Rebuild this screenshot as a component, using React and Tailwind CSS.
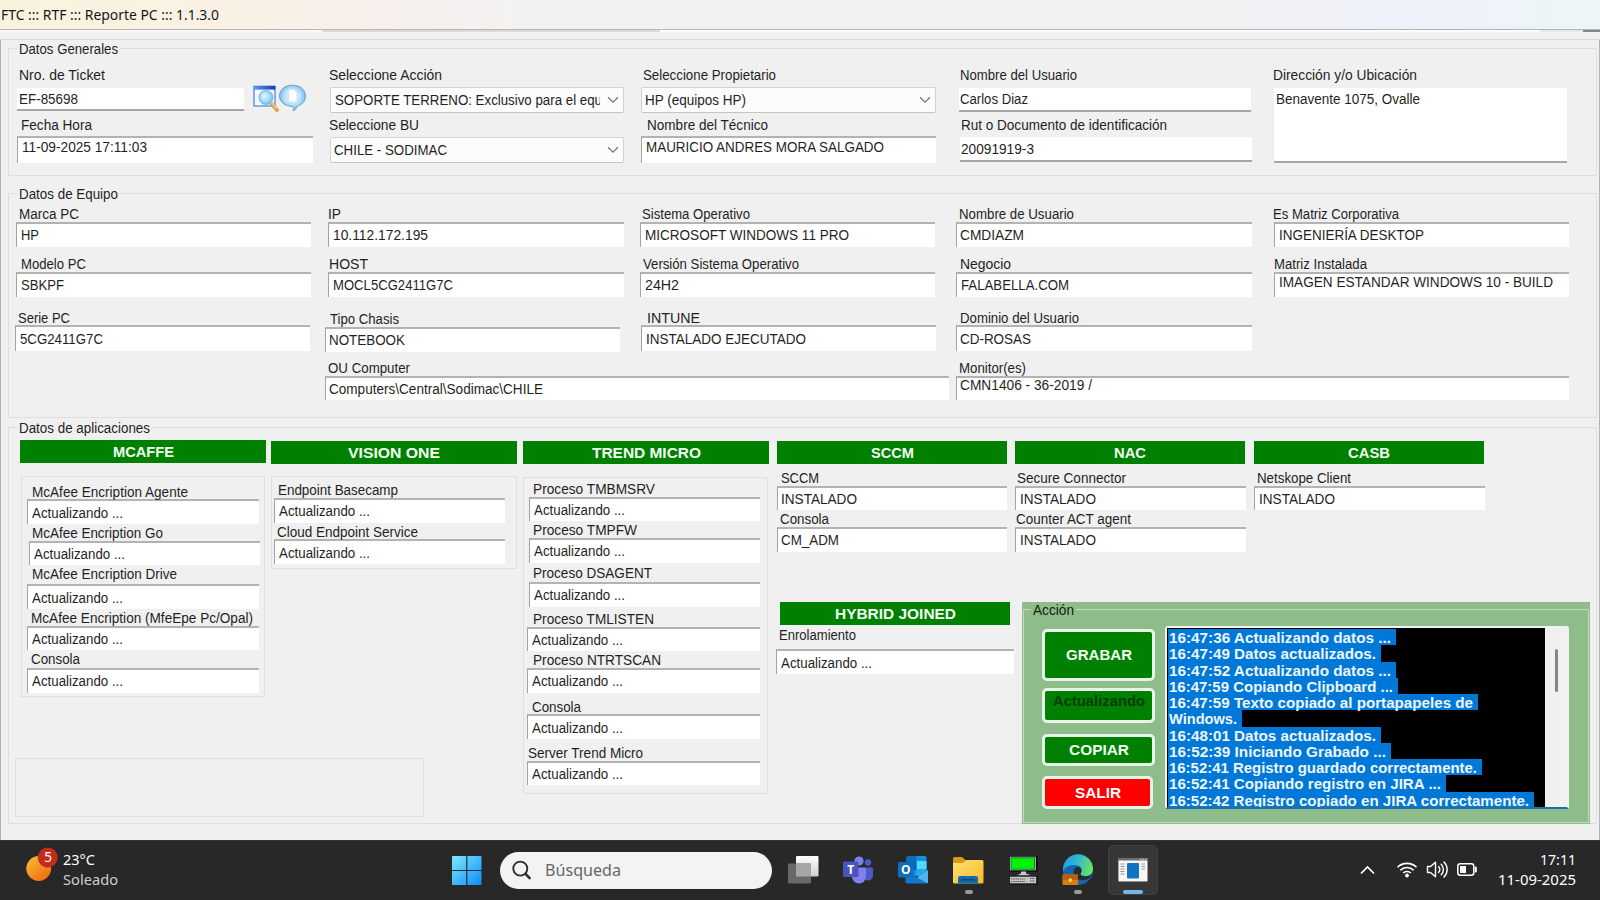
import { useLayoutEffect, useRef } from "react";

/* Text condensed or widened horizontally so that it takes exactly `w` pixels. */
function Fit({ w, children, className = "" }) {
  const ref = useRef(null);
  useLayoutEffect(() => {
    const el = ref.current;
    el.style.transform = "none";
    const natural = el.getBoundingClientRect().width;
    if (natural) el.style.transform = `scaleX(${w / natural})`;
  }, [w, children]);
  return (
    <span className={`block shrink-0 text-left ${className}`} style={{ width: w }}>
      <span ref={ref} className="inline-block origin-left whitespace-pre align-top">
        {children}
      </span>
    </span>
  );
}

const KINDS = {
  sunken: "border-t-2 border-l border-t-[#b3b3b3] border-l-[#a3a3a3] bg-white pb-[1px]",
  flat: "border-b-2 border-b-[#a6a6a6] bg-white",
  select: "border border-[#d2d2d2] border-b-[#c4c4c4] bg-[#fcfcfc] rounded-[2px]",
};

function Chevron() {
  return (
    <svg className="mr-[4px] ml-auto h-[8px] w-[12px] shrink-0" viewBox="0 0 12 8" fill="none">
      <path d="M1 1.2 6 6.2 11 1.2" stroke="#767676" strokeWidth="1.3" />
    </svg>
  );
}

function Field({ c = "", l, lw, lc = "", b, k = "sunken", v, vw, vc = "", clip }) {
  return (
    <div className={`flex flex-col items-start ${c}`}>
      <div className={`h-4 leading-4 ${lc}`}>
        <Fit w={lw + 2}>{l}</Fit>
      </div>
      <div className={`flex items-center ${KINDS[k]} ${b}`}>
        <div className={`leading-4 ${clip ? "w-[265px] shrink-0 overflow-hidden" : ""} ${vc}`}>
          <Fit w={vw + 1}>{v}</Fit>
        </div>
        {k === "select" && <Chevron />}
      </div>
    </div>
  );
}

function Group({ title, tw, className, children }) {
  return (
    <section className={`relative ml-[7px] w-[1589px] shrink-0 border border-[#dedede] ${className}`}>
      <div className="absolute -top-[8px] left-[8px] bg-[#f0f0f0] px-[2px] leading-4">
        <Fit w={tw + 1}>{title}</Fit>
      </div>
      {children}
    </section>
  );
}

function Header({ children, w, className = "" }) {
  return (
    <div
      className={`flex h-[23px] shrink-0 items-center justify-center bg-[#008000] font-bold leading-4 text-[#f2fff2] ${className}`}
    >
      <Fit w={w + 1}>{children}</Fit>
    </div>
  );
}

const A = "Actualizando ...";
const I = "INSTALADO";

function SearchIcons() {
  return (
    <svg className="mt-[17px] ml-[9px] h-[29px] w-[55px]" viewBox="0 0 55 29">
      <defs>
        <linearGradient id="bar" x1="0" x2="1">
          <stop offset="0" stopColor="#5b9bea" />
          <stop offset="1" stopColor="#1838b4" />
        </linearGradient>
        <radialGradient id="glass" cx=".4" cy=".4" r=".65">
          <stop offset="0" stopColor="#e0fbff" />
          <stop offset="1" stopColor="#6cc6f4" />
        </radialGradient>
        <radialGradient id="bubble" cx=".5" cy=".45" r=".6">
          <stop offset="0" stopColor="#f0fbff" />
          <stop offset=".55" stopColor="#b4e2fa" />
          <stop offset="1" stopColor="#4fa4de" />
        </radialGradient>
      </defs>
      <rect x="1" y="2.500" width="21" height="19.500" fill="#f3f8ff" stroke="#5a94e2" strokeWidth="1.4" />
      <rect x=".4" y="1.800" width="22" height="3.800" fill="url(#bar)" />
      <path d="m18 19 6 7" stroke="#dba44c" strokeWidth="4" strokeLinecap="round" />
      <path d="m18 18 5.6 6.4" stroke="#f3d08c" strokeWidth="1.3" strokeLinecap="round" />
      <circle cx="13" cy="13.500" r="6.800" fill="url(#glass)" stroke="#7fbbe8" strokeWidth="1.3" />
      <path
        d="M39.500 1.200c7.600 0 13 4.600 13 10.800 0 5.200-3.600 8.800-8.400 10-.4 2.300-1.700 4-4 4.800.6-1.500.5-3-.4-4.400C32.300 22.300 26.500 18.200 26.500 12 26.500 5.800 31.900 1.200 39.500 1.200Z"
        fill="url(#bubble)"
        stroke="#6f9dbd"
        strokeWidth="1"
      />
      <path d="M35.500 5.500h5.500l3 3V18H35.500Z" fill="#fdfdff" stroke="#c9d9ee" strokeWidth=".6" />
    </svg>
  );
}

function General() {
  return (
    <Group title="Datos Generales" tw={98} className="mt-[8px] flex h-[128px] pl-[6px] pt-[18px]">
      <div className="w-[310px] shrink-0">
        <div className="flex">
          <Field l="Nro. de Ticket" lw={84} lc="ml-[4px]" k="flat" b="ml-[2px] mt-[5px] h-[23px] w-[227px]" v="EF-85698" vw={58} vc="pl-[2px]" />
          <SearchIcons />
        </div>
        <Field c="mt-[4px]" l="Fecha Hora" lw={69} lc="ml-[6px]" b="ml-[2px] mt-[3px] h-[27px] w-[296px]" v="11-09-2025 17:11:03" vw={124} vc="pl-[4px] pb-[7px]" />
      </div>
      <div className="w-[315px] shrink-0">
        <Field l="Seleccione Acción" lw={111} lc="ml-[4px]" k="select" b="ml-[5px] mt-[4px] h-[26px] w-[294px]" v="SOPORTE TERRENO: Exclusivo para el equ" vw={266} vc="ml-[4px]" clip />
        <Field c="mt-[4px]" l="Seleccione BU" lw={88} lc="ml-[4px]" k="select" b="ml-[5px] mt-[4px] h-[26px] w-[294px]" v="CHILE - SODIMAC" vw={112} vc="ml-[3px]" />
      </div>
      <div className="w-[316px] shrink-0">
        <Field l="Seleccione Propietario" lw={131} lc="ml-[3px]" k="select" b="ml-[1px] mt-[4px] h-[26px] w-[295px]" v="HP (equipos HP)" vw={100} vc="ml-[3px]" />
        <Field c="mt-[4px]" l="Nombre del Técnico" lw={119} lc="ml-[7px]" b="ml-[1px] mt-[3px] h-[27px] w-[295px]" v="MAURICIO ANDRES MORA SALGADO" vw={237} vc="pl-[4px] pb-[7px]" />
      </div>
      <div className="w-[317px] shrink-0">
        <Field l="Nombre del Usuario" lw={115} lc="ml-[4px]" k="flat" b="ml-[3px] mt-[5px] h-[24px] w-[292px]" v="Carlos Diaz" vw={67} vc="pl-[1px]" />
        <Field c="mt-[5px]" l="Rut o Documento de identificación" lw={204} lc="ml-[5px]" k="flat" b="ml-[4px] mt-[4px] h-[25px] w-[292px]" v="20091919-3" vw={72} vc="pl-[1px]" />
      </div>
      <Field l="Dirección y/o Ubicación" lw={142} k="flat" b="ml-[1px] mt-[5px] h-[75px] w-[293px]" v="Benavente 1075, Ovalle" vw={143} vc="pl-[2px] pb-[51px]" />
    </Group>
  );
}

function Equipment() {
  return (
    <Group title="Datos de Equipo" tw={98} className="mt-[17px] flex h-[225px] pl-[6px] pt-[12px]">
      <div className="w-[310px] shrink-0">
        <Field l="Marca PC" lw={58} lc="ml-[4px]" b="ml-[1px] h-[25px] w-[295px]" v="HP" vw={17} vc="pl-[4px]" />
        <Field c="mt-[9px]" l="Modelo PC" lw={63} lc="ml-[6px]" b="ml-[1px] h-[25px] w-[295px]" v="SBKPF" vw={42} vc="pl-[4px]" />
        <Field c="mt-[13px]" l="Serie PC" lw={50} lc="ml-[3px]" b="-mt-[1px] h-[26px] w-[295px]" v="5CG2411G7C" vw={82} vc="pl-[4px]" />
      </div>
      <div className="w-[315px] shrink-0">
        <Field l="IP" lw={11} lc="ml-[3px]" b="ml-[3px] h-[25px] w-[296px]" v="10.112.172.195" vw={94} vc="pl-[4px]" />
        <Field c="mt-[9px]" l="HOST" lw={37} lc="ml-[4px]" b="ml-[3px] h-[25px] w-[296px]" v="MOCL5CG2411G7C" vw={119} vc="pl-[4px]" />
        <Field c="mt-[14px]" l="Tipo Chasis" lw={67} lc="ml-[5px]" b="h-[25px] w-[295px]" v="NOTEBOOK" vw={75} vc="pl-[3px]" />
        <Field c="mt-[8px]" l="OU Computer" lw={80} lc="ml-[3px]" b="relative h-[24px] w-[624px]" v={"Computers\\Central\\Sodimac\\CHILE"} vw={213} vc="pl-[3px]" />
      </div>
      <div className="w-[316px] shrink-0">
        <Field l="Sistema Operativo" lw={106} lc="ml-[2px]" b="h-[25px] w-[295px]" v="MICROSOFT WINDOWS 11 PRO" vw={203} vc="pl-[4px]" />
        <Field c="mt-[9px]" l="Versión Sistema Operativo" lw={154} lc="ml-[3px]" b="h-[25px] w-[295px]" v="24H2" vw={33} vc="pl-[4px]" />
        <Field c="mt-[13px]" l="INTUNE" lw={51} lc="ml-[7px]" b="ml-[1px] -mt-[1px] h-[26px] w-[295px]" v="INSTALADO EJECUTADO" vw={159} vc="pl-[4px]" />
      </div>
      <div className="w-[317px] shrink-0">
        <Field l="Nombre de Usuario" lw={113} lc="ml-[3px]" b="h-[25px] w-[296px]" v="CMDIAZM" vw={63} vc="pl-[3px]" />
        <Field c="mt-[9px]" l="Negocio" lw={49} lc="ml-[4px]" b="h-[25px] w-[296px]" v="FALABELLA.COM" vw={107} vc="pl-[4px]" />
        <Field c="mt-[13px]" l="Dominio del Usuario" lw={117} lc="ml-[4px]" b="-mt-[1px] h-[26px] w-[296px]" v="CD-ROSAS" vw={70} vc="pl-[3px]" />
        <Field c="mt-[9px]" l="Monitor(es)" lw={65} lc="ml-[3px]" b="h-[24px] w-[613px]" v="CMN1406 - 36-2019 /" vw={131} vc="pl-[3px] pb-[7px]" />
      </div>
      <div className="shrink-0">
        <Field l="Es Matriz Corporativa" lw={124} b="ml-[1px] h-[25px] w-[295px]" v="INGENIERÍA DESKTOP" vw={144} vc="pl-[4px]" />
        <Field c="mt-[9px]" l="Matriz Instalada" lw={91} lc="ml-[1px]" b="ml-[1px] h-[25px] w-[295px]" v="IMAGEN ESTANDAR WINDOWS 10 - BUILD" vw={273} vc="pl-[4px] pb-[7px]" />
      </div>
    </Group>
  );
}

function ActionButton({ children, w, className }) {
  return (
    <button
      className={`flex items-center justify-center rounded-[5px] border-[3px] border-[#e9f4e9] font-bold leading-4 ${className}`}
    >
      <Fit w={w + 1}>{children}</Fit>
    </button>
  );
}

const LOG = [
  ["16:47:36 Actualizando datos ...", 221],
  ["16:47:49 Datos actualizados.", 206],
  ["16:47:52 Actualizando datos ...", 221],
  ["16:47:59 Copiando Clipboard ...", 223],
  ["16:47:59 Texto copiado al portapapeles de", 303],
  ["Windows.", 67],
  ["16:48:01 Datos actualizados.", 206],
  ["16:52:39 Iniciando Grabado ...", 216],
  ["16:52:41 Registro guardado correctamente.", 307],
  ["16:52:41 Copiando registro en JIRA ...", 271],
  ["16:52:42 Registro copiado en JIRA correctamente.", 359],
];

function ActionPanel() {
  return (
    <div className="h-[222px] w-[568px] shrink-0 bg-[#8fbc8b] pt-[7px] pl-[1px]">
      <div className="relative flex h-[214px] w-[566px] border border-[#bfdabd] pl-[18px]">
        <div className="absolute -top-[8px] left-[7px] bg-[#8fbc8b] px-[2px] leading-4 text-[#10240f]">
          <Fit w={41}>Acción</Fit>
        </div>
        <div className="w-[123px] shrink-0 pt-[19px]">
          <ActionButton w={65} className="h-[52px] w-[113px] bg-[#008000] text-[#f2fff2]">GRABAR</ActionButton>
          <ActionButton w={91} className="mt-[7px] h-[35px] w-[113px] bg-[#008000] pb-[10px] text-[#053b05]">Actualizando</ActionButton>
          <ActionButton w={59} className="mt-[11px] h-[32px] w-[113px] bg-[#008000] text-[#f2fff2]">COPIAR</ActionButton>
          <ActionButton w={45} className="mt-[10px] h-[33px] w-[111px] bg-[#ff0000] text-white">SALIR</ActionButton>
        </div>
        <div className="mt-[16px] flex h-[183px] w-[404px] rounded-t-[3px] border-2 border-[#eef3ee] border-b-[#1d6fa5] bg-[#f0f0f0]">
          <div className="h-[179px] w-[378px] overflow-hidden bg-black pt-[1px] pl-[1px] font-bold text-[#eef7ff]">
            {LOG.map(([text, w], i) => (
              <div key={i} className="h-[16.25px] w-fit bg-[#0078d7] pr-[5px] pl-[1px] text-[14.500px] leading-[18px]">
                <Fit w={w + 1}>{text}</Fit>
              </div>
            ))}
          </div>
          <div className="mt-[21px] ml-[10px] h-[43px] w-[3px] rounded-full bg-[#868686]" />
        </div>
      </div>
    </div>
  );
}

function Applications() {
  return (
    <Group title="Datos de aplicaciones" tw={130} className="mt-[9px] flex h-[397px]">
      <div className="flex w-[514px] shrink-0 flex-col pl-[6px]">
        <div className="flex pl-[5px]">
          <div className="w-[251px] shrink-0 pt-[12px]">
            <Header w={60} className="w-[246px]">MCAFFE</Header>
            <div className="mt-[13px] ml-[1px] h-[221px] w-[244px] border border-[#dfdfdf] pt-[7px]">
              <Field l="McAfee Encription Agente" lw={154} lc="ml-[10px]" b="ml-[5px] -mt-[1px] h-[25px] w-[232px]" v={A} vw={90} vc="pl-[4px] pt-[1px]" />
              <Field c="mt-[1px]" l="McAfee Encription Go" lw={129} lc="ml-[10px]" b="ml-[7px] h-[24px] w-[231px]" v={A} vw={90} vc="pl-[4px]" />
              <Field c="mt-[1px]" l="McAfee Encription Drive" lw={143} lc="ml-[10px]" b="ml-[5px] mt-[2px] h-[25px] w-[232px]" v={A} vw={90} vc="pl-[4px] pt-[1px]" />
              <Field c="mt-[1px]" l="McAfee Encription (MfeEpe Pc/Opal)" lw={220} lc="ml-[9px]" b="ml-[5px] h-[24px] w-[232px]" v={A} vw={90} vc="pl-[4px]" />
              <Field c="mt-[1px]" l="Consola" lw={47} lc="ml-[9px]" b="ml-[5px] mt-[1px] h-[25px] w-[232px]" v={A} vw={90} vc="pl-[4px]" />
            </div>
          </div>
          <div className="w-[252px] shrink-0 pt-[13px]">
            <Header w={91} className="w-[246px]">VISION ONE</Header>
            <div className="mt-[12px] h-[93px] w-[246px] border border-[#dfdfdf] pt-[5px]">
              <Field l="Endpoint Basecamp" lw={118} lc="ml-[6px]" b="ml-[2px] h-[25px] w-[231px]" v={A} vw={90} vc="pl-[4px]" />
              <Field c="mt-[1px]" l="Cloud Endpoint Service" lw={139} lc="ml-[5px]" b="ml-[2px] -mt-[1px] h-[25px] w-[231px]" v={A} vw={90} vc="pl-[4px] pt-[1px]" />
            </div>
          </div>
        </div>
        <div className="mt-auto mb-[6px] h-[59px] w-[409px] border border-[#dfdfdf]" />
      </div>

      <div className="w-[253px] shrink-0 pt-[13px]">
        <Header w={108} className="w-[246px]">TREND MICRO</Header>
        <div className="mt-[13px] h-[317px] w-[245px] border border-[#dfdfdf] pt-[3px]">
          <Field l="Proceso TMBMSRV" lw={120} lc="ml-[9px]" b="ml-[5px] h-[24px] w-[231px]" v={A} vw={90} vc="pl-[4px]" />
          <Field c="mt-[1px]" l="Proceso TMPFW" lw={102} lc="ml-[9px]" b="ml-[5px] h-[25px] w-[231px]" v={A} vw={90} vc="pl-[4px]" />
          <Field c="mt-[2px]" l="Proceso DSAGENT" lw={117} lc="ml-[9px]" b="ml-[5px] mt-[1px] h-[25px] w-[231px]" v={A} vw={90} vc="pl-[4px]" />
          <Field c="mt-[4px]" l="Proceso TMLISTEN" lw={119} lc="ml-[9px]" b="ml-[3px] h-[24px] w-[233px]" v={A} vw={90} vc="pl-[4px]" />
          <Field c="mt-[1px]" l="Proceso NTRTSCAN" lw={126} lc="ml-[9px]" b="ml-[3px] h-[25px] w-[233px]" v={A} vw={90} vc="pl-[4px]" />
          <Field c="mt-[6px]" l="Consola" lw={47} lc="ml-[8px]" b="ml-[3px] -mt-[1px] h-[25px] w-[233px]" v={A} vw={90} vc="pl-[4px] pt-[1px]" />
          <Field c="mt-[6px]" l="Server Trend Micro" lw={113} lc="ml-[4px]" b="ml-[3px] h-[24px] w-[233px]" v={A} vw={90} vc="pl-[4px]" />
        </div>
      </div>

      <div className="shrink-0">
        <div className="flex h-[174px] pt-[13px] pl-[1px]">
          <div className="w-[238px] shrink-0">
            <Header w={42} className="mb-[6px] w-[230px]">SCCM</Header>
            <Field l="SCCM" lw={36} lc="ml-[4px]" b="h-[24px] w-[230px]" v={I} vw={75} vc="pl-[3px]" />
            <Field c="mt-[1px]" l="Consola" lw={47} lc="ml-[3px]" b="h-[25px] w-[230px]" v="CM_ADM" vw={57} vc="pl-[3px]" />
          </div>
          <div className="w-[239px] shrink-0">
            <Header w={31} className="mb-[6px] w-[230px]">NAC</Header>
            <Field l="Secure Connector" lw={107} lc="ml-[2px]" b="h-[24px] w-[231px]" v={I} vw={75} vc="pl-[4px]" />
            <Field c="mt-[1px]" l="Counter ACT agent" lw={113} lc="ml-[1px]" b="h-[25px] w-[231px]" v={I} vw={75} vc="pl-[4px]" />
          </div>
          <div className="shrink-0">
            <Header w={41} className="mb-[6px] w-[230px]">CASB</Header>
            <Field l="Netskope Client" lw={92} lc="ml-[3px]" b="h-[24px] w-[231px]" v={I} vw={75} vc="pl-[4px]" />
          </div>
        </div>
        <div className="flex">
          <div className="w-[246px] shrink-0">
            <Header w={120} className="ml-[4px] w-[230px] pt-[1px]">HYBRID JOINED</Header>
            <Field c="mt-[2px]" l="Enrolamiento" lw={75} lc="ml-[3px]" b="mt-[6px] h-[25px] w-[238px]" v={A} vw={90} vc="pl-[4px] pt-[1px]" />
          </div>
          <ActionPanel />
        </div>
      </div>
    </Group>
  );
}

function Taskbar() {
  return (
    <footer className="flex h-[60px] w-full items-start overflow-hidden border-t border-[#343434] bg-[#282828] font-['Noto_Sans'] text-[15px] text-white">
      <svg className="mt-[5px] ml-[25px] h-[38px] w-[34px] shrink-0" viewBox="0 0 34 38">
        <defs>
          <linearGradient id="sun" x1="0" y1="0" x2=".8" y2="1">
            <stop offset="0" stopColor="#f6c13a" />
            <stop offset="1" stopColor="#ee6a10" />
          </linearGradient>
        </defs>
        <circle cx="13.700" cy="22.500" r="12.400" fill="url(#sun)" />
        <circle cx="22.700" cy="11.500" r="10" fill="#c42b1c" />
        <text x="23.200" y="16" textAnchor="middle" fontSize="13.500" fill="#fff" fontFamily="Noto Sans">5</text>
      </svg>
      <div className="ml-[4px] w-[79px] pt-[8px] leading-5">
        <Fit w={32}>23°C</Fit>
        <Fit w={55} className="text-[#cfcfcf]">Soleado</Fit>
      </div>

      <svg className="mt-[15px] ml-[310px] h-[29px] w-[30px] shrink-0" viewBox="0 0 30 29">
        <defs>
          <linearGradient id="win" x1="0" y1="0" x2="1" y2="1">
            <stop offset="0" stopColor="#7deaff" />
            <stop offset="1" stopColor="#0a8cf8" />
          </linearGradient>
        </defs>
        <path d="M1 0h13.200v14H0V1a1 1 0 0 1 1-1ZM15.400 0H28.500a1 1 0 0 1 1 1v13H15.400ZM0 15h14.200v14H1a1 1 0 0 1-1-1ZM15.400 15h14.100v13a1 1 0 0 1-1 1H15.400Z" fill="url(#win)" />
      </svg>

      <div className="mt-[10.500px] ml-[18px] flex h-[37px] w-[272px] shrink-0 items-center rounded-full bg-[#f3f3f3]">
        <svg className="ml-[12px] h-[20px] w-[20px]" viewBox="0 0 20 20" fill="none" stroke="#303030">
          <circle cx="8.300" cy="8.600" r="7" strokeWidth="1.900" />
          <path d="m13.500 13.800 4.200 4.300" strokeWidth="2.600" strokeLinecap="round" />
        </svg>
        <Fit w={76} className="ml-[13px] text-[17px] leading-6 text-[#666]">Búsqueda</Fit>
      </div>

      <svg className="mt-[15px] ml-[16px] h-[28px] w-[31px] shrink-0" viewBox="0 0 31 28">
        <defs>
          <linearGradient id="tv" x1="0" y1="0" x2="0" y2="1">
            <stop offset="0" stopColor="#fff" />
            <stop offset="1" stopColor="#cfcfcf" />
          </linearGradient>
        </defs>
        <rect x="8" y="0" width="22.500" height="20.500" rx="1" fill="url(#tv)" />
        <rect x="0" y="7.500" width="23" height="20" rx="1" fill="#686868" />
        <path d="M8 7.500H23V20.500H8Z" fill="#a6a6a6" />
      </svg>

      <svg className="mt-[15px] ml-[24px] h-[29px] w-[31px] shrink-0" viewBox="0 0 31 29">
        <circle cx="25" cy="6.500" r="3.200" fill="#5059c9" />
        <path d="M20 11.500h8.500a1.500 1.500 0 0 1 1.500 1.500v6.500a5 5 0 0 1-8 4Z" fill="#5059c9" />
        <circle cx="16" cy="5" r="4.600" fill="#7b83eb" />
        <path d="M9 11.500h12.500a1.500 1.500 0 0 1 1.500 1.500v7.500a7 7 0 0 1-14 0Z" fill="#7b83eb" />
        <rect x="0" y="5.500" width="15.500" height="15.500" rx="1.500" fill="#4b53bc" />
        <text x="7.700" y="17.500" textAnchor="middle" fontSize="12" fontWeight="700" fill="#fff" fontFamily="Open Sans">T</text>
      </svg>

      <svg className="mt-[15px] ml-[24px] h-[29px] w-[31px] shrink-0" viewBox="0 0 31 29">
        <rect x="8.500" y="0" width="20" height="20" rx="1.500" fill="#1490df" />
        <path d="M8.500 1.500A1.500 1.500 0 0 1 10 0h8.500v6H8.500Z" fill="#0f6cbd" />
        <path d="M18.500 5h10v8h-10Z" fill="#50d9ff" />
        <path d="M8.500 6h10v8h-10Z" fill="#0364b8" />
        <path d="M18.500 13h10v5l-10 2Z" fill="#28a8ea" />
        <path d="M7.500 14 19 21.500 30 14v12a1.500 1.500 0 0 1-1.500 1.500H9A1.500 1.500 0 0 1 7.500 26Z" fill="#1278cc" />
        <path d="M30 14v12a1.500 1.500 0 0 1-.7 1.200L15.500 19.500 19 21.500Z" fill="#49b8f0" />
        <rect x="0" y="6" width="15.500" height="15.500" rx="1.500" fill="#0f6cbd" />
        <text x="7.700" y="18" textAnchor="middle" fontSize="12" fontWeight="700" fill="#fff" fontFamily="Open Sans">O</text>
      </svg>

      <div className="mt-[15px] ml-[24px] w-[31px] shrink-0">
        <svg className="h-[29px] w-[31px]" viewBox="0 0 31 29">
          <defs>
            <linearGradient id="folder" x1="0" y1="0" x2="1" y2="1">
              <stop offset="0" stopColor="#ffdf75" />
              <stop offset="1" stopColor="#f7bc26" />
            </linearGradient>
          </defs>
          <path d="M0 2.500A1.500 1.500 0 0 1 1.500 1H9l3.500 3V8H0Z" fill="#d99a14" />
          <path d="M0 7h10l3-3h16a1.500 1.500 0 0 1 1.500 1.500V26a1.500 1.500 0 0 1-1.500 1.500H1.500A1.500 1.500 0 0 1 0 26Z" fill="url(#folder)" />
          <path d="M5 27.500V22a2 2 0 0 1 2-2h16a2 2 0 0 1 2 2v5.500Z" fill="#146bb0" />
          <path d="M9 23.800h12" stroke="#0a3d70" strokeWidth="1.300" strokeLinecap="round" />
        </svg>
        <div className="mt-[5px] ml-[12px] h-[4px] w-[8px] rounded-full bg-[#9a9a9a]" />
      </div>

      <svg className="mt-[15px] ml-[25px] h-[29px] w-[29px] shrink-0" viewBox="0 0 29 29">
        <rect x="0" y="0" width="28.500" height="15.500" fill="#000" />
        <rect x=".8" y=".7" width="26" height="13.600" fill="#d0d0d0" />
        <rect x="2" y="1.800" width="23.600" height="11.400" fill="#00f400" stroke="#063" strokeWidth=".8" />
        <path d="M12 15.500h5v2l5 1.800H8l4-1.800Z" fill="#c8c8c8" />
        <rect x="0" y="19.800" width="28.500" height="8.600" fill="#000" />
        <rect x=".8" y="20.600" width="26.500" height="6.800" fill="#c4c4c4" />
        <path d="M2 23h14M2 25.500h14M21 22.500h5M21 25h5" stroke="#555" strokeDasharray="1.500 .7" />
      </svg>

      <div className="mt-[13px] ml-[24px] w-[32px] shrink-0">
        <svg className="h-[32px] w-[32px]" viewBox="0 0 32 32">
          <defs>
            <linearGradient id="edge" x1="0" y1=".3" x2="1" y2=".6">
              <stop offset="0" stopColor="#1c9be8" />
              <stop offset=".45" stopColor="#35b8d0" />
              <stop offset="1" stopColor="#6be35c" />
            </linearGradient>
          </defs>
          <circle cx="16" cy="16" r="15" fill="#1566ae" />
          <path d="M1 16A15 15 0 0 1 31 14.500c.2 5-3.500 7.500-8 7.500-3.500 0-5.500-1.500-4-3.500 1.800-2.800 0-7-5-7.500C7.500 10.500 2.500 13 1 18Z" fill="url(#edge)" />
          <path d="M11.500 20c-.5-4 2-7.200 5-7.200 2.800 1.400 4 3.900 2.500 6-1.400 2 .6 3.600 4 3.600 2.600 0 4.800-.6 6.600-2.200-1 2-2 3.500-3 4.600-6 3-14.300 1-15.100-4.800Z" fill="#252b33" />
          <rect x=".5" y="20.500" width="15.500" height="10.500" rx="1" fill="#d97f12" />
          <path d="M.5 21.500a1 1 0 0 1 1-1h13.500a1 1 0 0 1 1 1V26H.5Z" fill="#b5600c" />
          <rect x="6.800" y="24.500" width="3" height="3.200" rx=".6" fill="#ffd76a" />
        </svg>
        <div className="mt-[4px] ml-[12px] h-[4px] w-[8px] rounded-full bg-[#9a9a9a]" />
      </div>

      <div className="mt-[4px] ml-[14px] flex h-[50px] w-[50px] shrink-0 flex-col items-center rounded-[5px] border border-[#424242] bg-[#373737] pt-[12px]">
        <svg className="h-[24px] w-[30px]" viewBox="0 0 30 24">
          <rect x=".3" y=".3" width="29.300" height="23.200" rx="1" fill="#f7f7f7" stroke="#8a8a8a" strokeWidth=".6" />
          <path d="M0 0h30v2.500H0Z" fill="#6d6d6d" />
          <path d="M22 1.200h1.500M24.500 1.200H26M27 1.200h1.500" stroke="#eee" strokeWidth=".8" />
          <rect x="9" y="5" width="12" height="15.500" rx="1" fill="#1173c6" />
          <path d="M2.500 6h4M2.500 8.500h4M2.500 11h4M2.500 13.500h4M2.500 16h4M23.500 6h3.500M23.500 8.500h3.500M23.500 11h3.500" stroke="#888" strokeWidth=".9" />
        </svg>
        <div className="mt-[8px] h-[4px] w-[20px] shrink-0 rounded-full bg-[#76b5e8]" />
      </div>

      <svg className="mt-[17px] ml-auto h-[22px] w-[120px] shrink-0" viewBox="0 0 120 22" fill="none" stroke="#fff">
        <path d="m4 15.500 6.500-6.500 6.500 6.500" strokeWidth="1.700" />
        <g strokeWidth="1.600">
          <path d="M40.500 9.300a13.400 13.400 0 0 1 19 0" />
          <path d="M43.300 12.200a9.500 9.500 0 0 1 13.400 0" />
          <path d="M46.200 15a5.400 5.400 0 0 1 7.600 0" />
          <circle cx="50" cy="17.500" r="1.500" fill="#fff" strokeWidth="1" />
        </g>
        <g strokeWidth="1.400" strokeLinejoin="round" strokeLinecap="round">
          <path d="M70.500 8.500h3l5-4.300v14.600l-5-4.300h-3Z" />
          <path d="M81.500 8.500a4 4 0 0 1 0 6" />
          <path d="M84.200 6.300a7.300 7.300 0 0 1 0 10.400" />
          <path d="M87 4a10.500 10.500 0 0 1 0 15" />
        </g>
        <rect x="100.800" y="5.800" width="16" height="11.400" rx="2.500" strokeWidth="1.500" />
        <rect x="103" y="8" width="6" height="7" fill="#fff" stroke="none" />
        <path d="M118.800 9.500v4" strokeWidth="2" strokeLinecap="round" />
      </svg>
      <div className="mr-[24px] ml-[21px] flex w-[78px] shrink-0 flex-col items-end pt-[8px] leading-5">
        <Fit w={36}>17:11</Fit>
        <Fit w={78}>11-09-2025</Fit>
      </div>
    </footer>
  );
}

export default function App() {
  return (
    <div className="flex h-[900px] w-[1600px] flex-col overflow-hidden bg-[#f0f0f0] font-['Liberation_Sans',sans-serif] text-[14px] text-[#1f1f24]">
      <header className="flex h-[30px] shrink-0 items-center border-b border-[#b9b6b2] bg-[linear-gradient(90deg,#f9f3dd_0px,#faf1e4_220px,#f8efea_340px,#f3f2f2_520px,#f3f2f2_1180px,#eef2fa_1400px,#edf5f7_1600px)] pb-[2px] pl-[1px] font-['Noto_Sans'] text-[15px] leading-5 text-[#161616]">
        <Fit w={218}>FTC ::: RTF ::: Reporte PC ::: 1.1.3.0</Fit>
      </header>
      <div className="flex h-[10px] shrink-0 flex-col border-b border-[#dcdcdc]">
        <div className="flex h-[2px]">
          <div className="w-[322px] bg-[#f9f9f9]" />
          <div className="w-[338px] bg-[#dedad7]" />
          <div className="w-[880px] bg-[#fbfbfb]" />
          <div className="w-[43px] bg-[#e6e8e8]" />
          <div className="w-[17px] bg-[#838b8d]" />
        </div>
      </div>
      <main className="flex h-[800px] shrink-0 flex-col border-r border-l border-[#b4b4b4]">
        <General />
        <Equipment />
        <Applications />
      </main>
      <Taskbar />
    </div>
  );
}
